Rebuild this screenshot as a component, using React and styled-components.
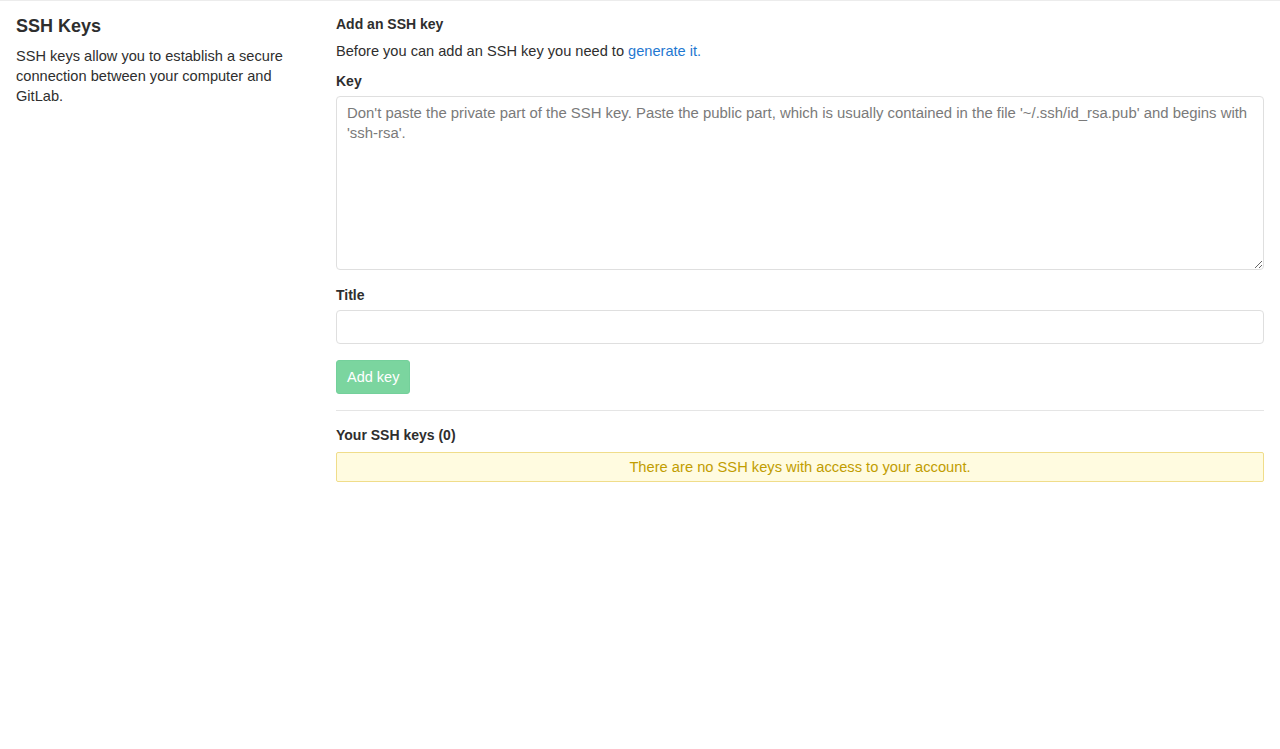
import React from "react";
import styled, { createGlobalStyle } from "styled-components";

const GlobalStyle = createGlobalStyle`
  body {
    margin: 0;
    background: #fff;
    color: #2e2e2e;
    font-family: "Liberation Sans", Arial, sans-serif;
    font-size: 14px;
    line-height: 20px;
  }
  * { box-sizing: border-box; }
`;

const StPage = styled.div`
  border-top: 1px solid #ececec;
  display: grid;
  grid-template-columns: 320px 960px;
  padding-top: 10px;
`;

const StSide = styled.div`
  padding: 0 16px;
`;

const StSideTitle = styled.h4`
  margin: 3px 0 8px;
  font-size: 18px;
  font-weight: bold;
  line-height: 24px;
  color: #2e2e2e;
`;

const StSideText = styled.p`
  margin: 0;
  font-size: 14.6px;
  line-height: 20px;
`;

const StMain = styled.div`
  padding: 0 16px;
`;

const StHeading = styled.h5`
  margin: 3px 0 7px;
  font-size: 14px;
  font-weight: bold;
  line-height: 20px;
`;

const StText = styled.p`
  margin: 0 0 10px;
  font-size: 14.6px;
`;

const StLink = styled.a`
  color: #1f78d1;
  text-decoration: none;
`;

const StLabel = styled.label`
  display: block;
  font-weight: bold;
  margin-bottom: 5px;
  font-size: 14px;
`;

const StField = styled.div`
  margin-bottom: ${(p) => p.$gap || 16}px;
`;

const StTextarea = styled.textarea`
  display: block;
  width: 100%;
  height: 174px;
  padding: 6px 10px;
  border: 1px solid #dfdfdf;
  border-radius: 4px;
  font-family: inherit;
  font-size: 14.9px;
  line-height: 20px;
  color: #2e2e2e;
  resize: vertical;

  &::placeholder {
    color: #7a7a7a;
  }
`;

const StInput = styled.input`
  display: block;
  width: 100%;
  height: 34px;
  padding: 6px 10px;
  border: 1px solid #dfdfdf;
  border-radius: 4px;
  font-family: inherit;
  font-size: 14px;
`;

const StButton = styled.button`
  height: 34px;
  padding: 0 10px;
  border: 1px solid #74d09b;
  border-radius: 3px;
  background: #7bd59f;
  color: #ffffff;
  font-family: inherit;
  font-size: 14.5px;
  cursor: not-allowed;
`;

const StRule = styled.hr`
  border: 0;
  border-top: 1px solid #e5e5e5;
  margin: 16px 0 14px;
`;

const StAlert = styled.div`
  height: 30px;
  border: 1px solid #f0dd8a;
  border-radius: 2px;
  background: #fffbe0;
  color: #c19d00;
  text-align: center;
  font-size: 14.7px;
  line-height: 28px;
`;

const App = () => {
  return (
    <>
      <GlobalStyle />
      <StPage>
        <StSide>
          <StSideTitle>SSH Keys</StSideTitle>
          <StSideText>
            SSH keys allow you to establish a secure connection between your computer and
            GitLab.
          </StSideText>
        </StSide>
        <StMain>
          <StHeading>Add an SSH key</StHeading>
          <StText>
            Before you can add an SSH key you need to <StLink href="#">generate it.</StLink>
          </StText>
          <StField $gap={15}>
            <StLabel>Key</StLabel>
            <StTextarea placeholder="Don't paste the private part of the SSH key. Paste the public part, which is usually contained in the file '~/.ssh/id_rsa.pub' and begins with 'ssh-rsa'." />
          </StField>
          <StField>
            <StLabel>Title</StLabel>
            <StInput type="text" />
          </StField>
          <StButton type="button">Add key</StButton>
          <StRule />
          <StHeading>Your SSH keys (0)</StHeading>
          <StAlert>There are no SSH keys with access to your account.</StAlert>
        </StMain>
      </StPage>
    </>
  );
};

export default App;
